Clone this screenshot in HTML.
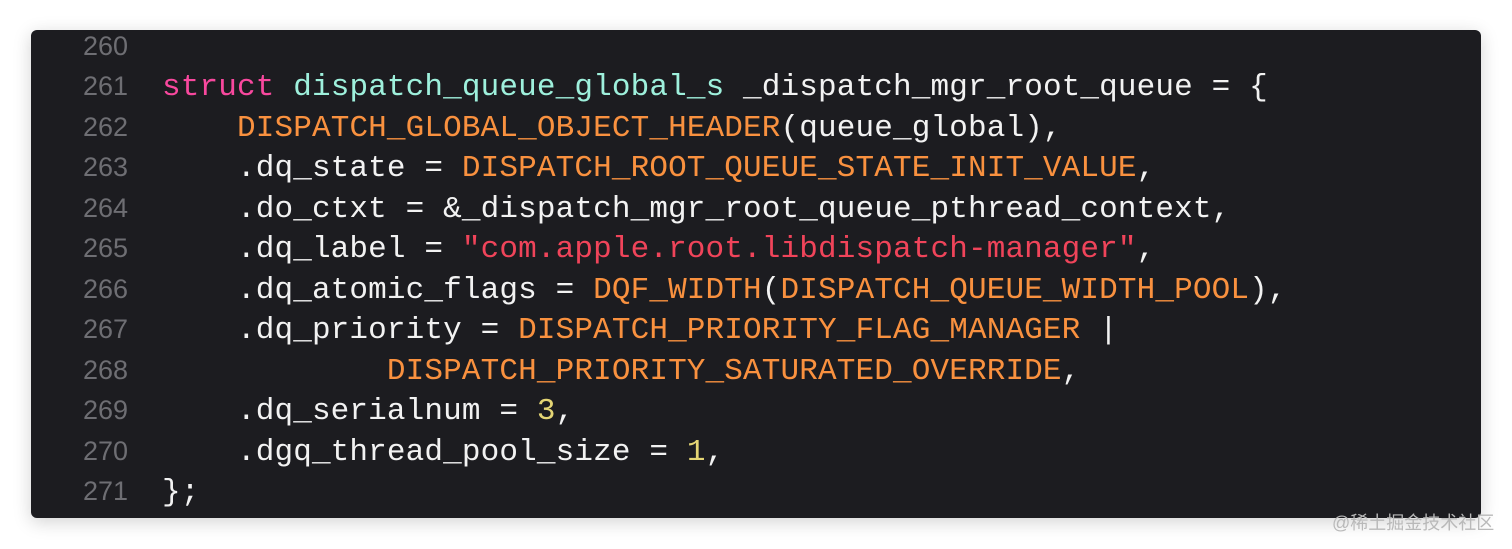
<!DOCTYPE html>
<html><head><meta charset="utf-8"><style>
html,body{margin:0;padding:0;background:#fff;width:1512px;height:549px;overflow:hidden;position:relative}
.panel{position:absolute;left:31px;top:30px;width:1450px;height:488px;background:#1c1c20;border-radius:6px;box-shadow:0 4px 18px rgba(0,0,0,.18)}
.ln{position:absolute;left:60px;width:68px;text-align:right;font-family:"Liberation Sans",sans-serif;font-size:27px;color:#6e6e73;top:26px;line-height:40.45px}
.code{position:absolute;left:162px;top:28px;font-family:"Liberation Mono",monospace;font-size:31px;letter-spacing:0.14px;line-height:40.45px;color:#f2f2f2;white-space:pre}
.k{color:#f8489e}.t{color:#9ef0dc}.m{color:#f9913f}.s{color:#f0445a}.n{color:#e4d574}
.wm{position:absolute;left:1332px;top:509px;font-family:"Liberation Sans","Noto Sans CJK SC",sans-serif;font-size:18px;color:#b9b9b9}
</style></head><body>
<div class="panel"></div>
<div class="ln">260<br>261<br>262<br>263<br>264<br>265<br>266<br>267<br>268<br>269<br>270<br>271</div>
<div class="code">
<span class="k">struct</span> <span class="t">dispatch_queue_global_s</span> _dispatch_mgr_root_queue = {
    <span class="m">DISPATCH_GLOBAL_OBJECT_HEADER</span>(queue_global),
    .dq_state = <span class="m">DISPATCH_ROOT_QUEUE_STATE_INIT_VALUE</span>,
    .do_ctxt = &amp;_dispatch_mgr_root_queue_pthread_context,
    .dq_label = <span class="s">"com.apple.root.libdispatch-manager"</span>,
    .dq_atomic_flags = <span class="m">DQF_WIDTH</span>(<span class="m">DISPATCH_QUEUE_WIDTH_POOL</span>),
    .dq_priority = <span class="m">DISPATCH_PRIORITY_FLAG_MANAGER</span> |
            <span class="m">DISPATCH_PRIORITY_SATURATED_OVERRIDE</span>,
    .dq_serialnum = <span class="n">3</span>,
    .dgq_thread_pool_size = <span class="n">1</span>,
};</div>
<div class="wm">@稀土掘金技术社区</div>
</body></html>
